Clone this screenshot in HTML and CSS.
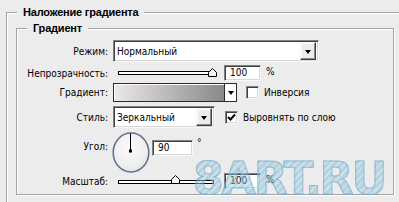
FILE: index.html
```html
<!DOCTYPE html>
<html lang="ru">
<head>
<meta charset="utf-8">
<link rel="stylesheet" href="styles.css">
</head>
<body>
<fieldset class="group outer">
  <legend class="title">Наложение градиента</legend>
  <fieldset class="group inner">
    <legend class="title">Градиент</legend>
    <div class="form">
      <div class="row row-mode">
        <span class="label">Режим:</span>
        <div class="select select-mode">
          <span class="select-text">Нормальный</span>
          <span class="dd-btn"><i class="arrow"></i></span>
        </div>
      </div>
      <div class="row row-opacity">
        <span class="label">Непрозрачность:</span>
        <div class="slider">
          <div class="track"></div>
          <svg class="thumb" style="left:95px" width="9" height="9" viewBox="0 0 9 9"><polygon points="0.5,8.5 0.5,4.5 4.5,0.5 8.5,4.5 8.5,8.5" fill="#f4f4f4" stroke="#000" stroke-width="1"/></svg>
        </div>
        <span class="field num">100</span>
        <span class="unit">%</span>
      </div>
      <div class="row row-grad">
        <span class="label">Градиент:</span>
        <div class="grad">
          <span class="grad-fill"></span>
          <span class="grad-btn"><i class="arrow"></i></span>
        </div>
        <span class="check"></span>
        <span class="check-label">Инверсия</span>
      </div>
      <div class="row row-style">
        <span class="label">Стиль:</span>
        <div class="select select-style">
          <span class="select-text">Зеркальный</span>
          <span class="dd-btn"><i class="arrow"></i></span>
        </div>
        <span class="check checked"><svg width="9" height="9" viewBox="0 0 9 9"><polyline points="1,4 3.5,6.5 8,1.5" fill="none" stroke="#000" stroke-width="2"/></svg></span>
        <span class="check-label">Выровнять по слою</span>
      </div>
      <div class="row row-angle">
        <span class="label">Угол:</span>
        <svg class="dial" width="39" height="41" viewBox="0 0 39 41">
          <defs>
            <radialGradient id="dg" cx="0.45" cy="0.4" r="0.6">
              <stop offset="0" stop-color="#fbfbfb"/>
              <stop offset="0.8" stop-color="#eeeeee"/>
              <stop offset="1" stop-color="#dfe2e8"/>
            </radialGradient>
          </defs>
          <ellipse cx="19" cy="20.5" rx="17.8" ry="19.6" fill="url(#dg)" stroke="#5f6e8f" stroke-width="1.5"/>
          <line x1="18.5" y1="1.5" x2="18.5" y2="19" stroke="#000" stroke-width="1"/>
          <rect x="17" y="17.5" width="3" height="3" fill="#000"/>
        </svg>
        <span class="field angle">90</span>
        <span class="deg">°</span>
      </div>
      <div class="row row-scale">
        <span class="label">Масштаб:</span>
        <div class="slider">
          <div class="track"></div>
          <svg class="thumb" style="left:58px" width="9" height="9" viewBox="0 0 9 9"><polygon points="0.5,8.5 0.5,4.5 4.5,0.5 8.5,4.5 8.5,8.5" fill="#f4f4f4" stroke="#000" stroke-width="1"/></svg>
        </div>
        <span class="field num">100</span>
        <span class="unit">%</span>
      </div>
    </div>
  </fieldset>
</fieldset>
<div class="watermark">8ART.RU</div>
</body>
</html>
```
FILE: styles.css
```css
html, body {
  margin: 0;
  padding: 0;
}
body {
  width: 399px;
  height: 202px;
  overflow: hidden;
  background: #ececec;
  font-family: "DejaVu Sans Condensed", "Liberation Sans", Arial, sans-serif;
  font-size: 10px;
  color: #000;
  position: relative;
}
.group {
  margin: 0;
  padding: 0;
  min-width: 0;
  border: 1px solid #a3a3a3;
  box-shadow: inset 1px 1px 0 #fff, 1px 1px 0 #fff;
}
.title {
  font-family: "Liberation Sans", Arial, sans-serif;
  font-weight: bold;
  font-size: 11px;
  line-height: 13px;
  height: 13px;
  padding: 0 6px;
  margin-left: 10px;
  background: #ececec;
  letter-spacing: -0.2px;
}
.outer {
  margin-left: 6px;
  margin-top: 6px;
  width: 394px;
  height: 197px;
  box-sizing: border-box;
}
.inner {
  margin-left: 9px;
  margin-top: 3px;
  width: 378px;
  box-sizing: border-box;
  padding: 5px 0 5px 0;
}
.form {
  display: flex;
  flex-direction: column;
}
.row {
  display: flex;
  align-items: center;
}
.label {
  width: 91px;
  text-align: right;
  margin-right: 5px;
  white-space: nowrap;
}
.row-mode { height: 22px; }
.row-opacity { height: 16px; margin-top: 3px; }
.row-grad { height: 19px; margin-top: 2px; }
.row-style { height: 22px; margin-top: 4px; }
.row-angle { height: 40px; margin-top: 4px; align-items: flex-start; }
.row-scale { height: 16px; margin-top: 1px; }

.select {
  display: flex;
  align-items: center;
  height: 22px;
  box-sizing: border-box;
  border: 1px solid;
  border-color: #808080 #f8f8f8 #f8f8f8 #808080;
  box-shadow: inset 1px 1px 0 #404040, inset -1px -1px 0 #d8d8d8;
  background: #fff;
  padding: 1px 2px 1px 3px;
}
.select-mode { width: 206px; }
.select-style { width: 102px; }
.select-text {
  flex: 1;
  white-space: nowrap;
}
.dd-btn {
  width: 16px;
  height: 18px;
  box-sizing: border-box;
  border: 1px solid;
  border-color: #f4f4f4 #404040 #404040 #f4f4f4;
  box-shadow: inset -1px -1px 0 #8a8a8a, inset 1px 1px 0 #fff;
  background: #ececec;
  display: flex;
  align-items: center;
  justify-content: center;
}
.arrow {
  display: block;
  width: 0;
  height: 0;
  border-left: 3px solid transparent;
  border-right: 3px solid transparent;
  border-top: 4px solid #000;
  margin-top: 1px;
}
.slider {
  position: relative;
  width: 111px;
  height: 16px;
  display: flex;
  align-items: center;
}
.track {
  margin-left: 5px;
  width: 96px;
  height: 4px;
  box-sizing: border-box;
  border: 1px solid #000;
  background: #fff;
}
.thumb {
  position: absolute;
  top: 3px;
}
.row-scale .track { margin-top: 2px; }
.row-scale .thumb { top: 2px; }
.field {
  display: block;
  height: 16px;
  box-sizing: border-box;
  border: 1px solid;
  border-color: #808080 #f8f8f8 #f8f8f8 #808080;
  box-shadow: inset 1px 1px 0 #404040, inset -1px -1px 0 #d8d8d8;
  background: #fff;
  line-height: 14px;
  padding-left: 5px;
}
.num { width: 37px; }
.unit { margin-left: 5px; margin-top: -4px; }
.grad {
  display: flex;
  width: 124px;
  height: 19px;
  box-sizing: border-box;
  border: 1px solid #2a2a2a;
  background: #fff;
}
.grad-fill {
  flex: 1;
  background: linear-gradient(to right, #ebe8e6, #8a8888);
  box-shadow: inset 1px 1px 0 #fff;
}
.grad-btn {
  width: 11px;
  border-left: 1px solid #2a2a2a;
  background: #fff;
  display: flex;
  align-items: center;
  justify-content: center;
}
.check {
  width: 13px;
  height: 13px;
  box-sizing: border-box;
  border: 1px solid;
  border-color: #808080 #f8f8f8 #f8f8f8 #808080;
  box-shadow: inset 1px 1px 0 #404040, inset -1px -1px 0 #d8d8d8;
  background: #fff;
  display: flex;
  align-items: center;
  justify-content: center;
}
.row-grad .check { margin-left: 9px; }
.row-style .check { margin-left: 10px; }
.check-label { margin-left: 5px; white-space: nowrap; }
.row-angle .label { margin-top: 9px; }
.dial { margin-left: -1px; display: block; }
.angle { width: 41px; margin-left: 1px; margin-top: 8px; }
.deg { margin-left: 4px; margin-top: 5px; line-height: 11px; }

.watermark {
  position: absolute;
  left: 193px;
  top: 155px;
  font-family: "DejaVu Sans", sans-serif;
  font-weight: bold;
  font-size: 44px;
  line-height: 48px;
  letter-spacing: -2px;
  color: transparent;
  background: repeating-linear-gradient(135deg, rgba(125,185,212,0.5) 0 3px, rgba(175,212,230,0.5) 3px 5px);
  -webkit-background-clip: text;
  background-clip: text;
  -webkit-text-stroke: 1px rgba(95,155,190,0.5);
  pointer-events: none;
}
```
